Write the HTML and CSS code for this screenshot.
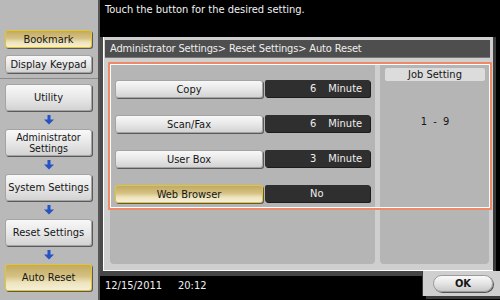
FILE: index.html
```html
<!DOCTYPE html>
<html lang="en">

<head>
  <meta charset="UTF-8">
  <title>Auto Reset</title>
  <link rel="stylesheet" href="styles.css">
</head>

<body>
  <div class="screen">
    <aside class="sidebar">
      <div class="shortcuts">
        <div class="btn btn-active">Bookmark</div>
        <div class="btn">Display Keypad</div>
      </div>

      <div class="crumbs">
        <div class="btn btn-tall">Utility</div>
        <div class="arrow"><svg width="10" height="10" viewBox="0 0 10 10"><path d="M3.5 0h3v4.5H10L5 9.5 0 4.5h3.5z" fill="#2553c4"/></svg></div>
        <div class="btn btn-tall btn-two">Administrator<br>Settings</div>
        <div class="arrow"><svg width="10" height="10" viewBox="0 0 10 10"><path d="M3.5 0h3v4.5H10L5 9.5 0 4.5h3.5z" fill="#2553c4"/></svg></div>
        <div class="btn btn-tall">System Settings</div>
        <div class="arrow"><svg width="10" height="10" viewBox="0 0 10 10"><path d="M3.5 0h3v4.5H10L5 9.5 0 4.5h3.5z" fill="#2553c4"/></svg></div>
        <div class="btn btn-tall">Reset Settings</div>
        <div class="arrow"><svg width="10" height="10" viewBox="0 0 10 10"><path d="M3.5 0h3v4.5H10L5 9.5 0 4.5h3.5z" fill="#2553c4"/></svg></div>
        <div class="btn btn-tall btn-active">Auto Reset</div>
      </div>
    </aside>

    <main class="main">
      <p class="prompt">Touch the button for the desired setting.</p>

      <section class="panel">
        <div class="panel-title">Administrator Settings&gt; Reset Settings&gt; Auto Reset</div>

        <div class="panel-body">
          <div class="settings">
            <div class="row">
              <div class="btn row-label">Copy</div>
              <div class="row-value"><span>6</span><span class="unit">Minute</span></div>
            </div>
            <div class="row">
              <div class="btn row-label">Scan/Fax</div>
              <div class="row-value"><span>6</span><span class="unit">Minute</span></div>
            </div>
            <div class="row">
              <div class="btn row-label">User Box</div>
              <div class="row-value"><span>3</span><span class="unit">Minute</span></div>
            </div>
            <div class="row">
              <div class="btn btn-active row-label">Web Browser</div>
              <div class="row-value"><span>No</span></div>
            </div>
          </div>

          <div class="job">
            <div class="job-label">Job Setting</div>
            <div class="job-range">1 &nbsp;- &nbsp;9</div>
          </div>
        </div>

        <div class="focus-ring"></div>
      </section>

      <div class="footer">
        <div class="clock"><span>12/15/2011</span><span class="time">20:12</span></div>
        <div class="ok-tab">
          <div class="btn-ok">OK</div>
        </div>
      </div>
    </main>
  </div>
</body>

</html>
```

FILE: styles.css
```css
body {
  margin: 0;
  background: #000;
  font-family: 'DejaVu Sans Condensed', 'DejaVu Sans', sans-serif;
  font-stretch: condensed;
  font-size: 11px;
  color: #151515;
}

.screen {
  display: flex;
  width: 500px;
  height: 300px;
  overflow: hidden;
}

/* left column */
.sidebar {
  width: 98px;
  background: #b9b9b9;
  border-right: 2px solid #555;
}

.shortcuts {
  height: 79px;
  box-sizing: border-box;
  padding: 30px 6px 0 5px;
  display: flex;
  flex-direction: column;
  gap: 7px;
  border-bottom: 1px solid #8a8a8a;
}

.crumbs {
  padding: 5px 6px 0 5px;
  display: flex;
  flex-direction: column;
}

.btn {
  height: 16px;
  display: flex;
  align-items: center;
  justify-content: center;
  text-align: center;
  line-height: 13px;
  border: 1px solid #a4a4a4;
  border-radius: 3px;
  background: linear-gradient(#f8f8f8, #e8e8e8 50%, #d3d3d3);
  box-shadow: 1px 1px 0 #5a5a5a;
}

.btn-tall {
  height: 25px;
}

.btn-two {
  font-size: 10.5px;
  line-height: 11px;
  padding-top: 1px;
  box-sizing: content-box;
  height: 24px;
}

.btn-active {
  border-color: #e4c62a;
  background: linear-gradient(#c3aa60, #d5c184 45%, #ede3bb 70%, #f5efd9);
}

.arrow {
  height: 18px;
  display: flex;
  align-items: center;
  justify-content: center;
}

/* right part */
.main {
  flex: 1;
  display: flex;
  flex-direction: column;
}

.prompt {
  height: 37px;
  box-sizing: border-box;
  margin: 0;
  padding: 3px 0 0 5px;
  color: #f2f2f2;
}

.panel {
  position: relative;
  width: 393px;
  height: 234px;
  box-sizing: border-box;
  padding: 3px 3px 0 2px;
  background: #cfcfcf;
  border-left: 3px solid #4b4b4b;
  box-shadow: 3px 0 0 #3a3a3a, inset 1px -1px 0 #fff;
}

.panel-title {
  height: 18px;
  padding-left: 5px;
  line-height: 18px;
  color: #eee;
  background: #4e4e4e;
  border-bottom: 1px solid #777;
  box-sizing: border-box;
  letter-spacing: -0.15px;
}

.panel-body {
  display: flex;
  gap: 5px;
  margin: 4px 0 0 5px;
}

.settings,
.job {
  height: 202px;
  box-sizing: border-box;
  background: #b5b5b5;
  border-radius: 0 0 4px 4px;
}

.settings {
  width: 265px;
  padding: 18px 5px 0;
  display: flex;
  flex-direction: column;
  gap: 17px;
}

.row {
  display: flex;
  gap: 2px;
  height: 18px;
}

.row-label {
  width: 146px;
}

.row-value {
  width: 105px;
  height: 17px;
  box-sizing: border-box;
  padding-left: 45px;
  display: flex;
  align-items: center;
  color: #f0f0f0;
  background: #2f2f2f;
  border-radius: 2px;
  box-shadow: 1px 1px 0 #1c1c1c;
}

.unit {
  margin-left: 12px;
}

.job {
  width: 109px;
  padding: 6px 4px 0 5px;
}

.job-label {
  height: 13px;
  line-height: 13px;
  text-align: center;
  background: #dcdcdc;
  border-radius: 2px;
}

.job-range {
  margin-top: 34px;
  text-align: center;
}

.focus-ring {
  position: absolute;
  left: 5px;
  top: 25px;
  width: 384px;
  height: 148px;
  box-sizing: border-box;
  border: 2px solid #ef8a68;
  box-shadow: inset 0 0 0 1px #fff;
}

.footer {
  flex: 1;
  display: flex;
}

.clock {
  flex: 1;
  padding: 3px 0 0 5px;
  border-top: 5px solid #464646;
  color: #f0f0f0;
}

.time {
  margin-left: 16px;
}

.ok-tab {
  width: 77px;
  height: 25px;
  box-sizing: border-box;
  padding: 4px 0 0 10px;
  background: #cfcfcf;
  box-shadow: 3px 3px 0 #3a3a3a, -1px 0 0 #3a3a3a;
}

.btn-ok {
  width: 60px;
  height: 17px;
  display: flex;
  align-items: center;
  justify-content: center;
  font-weight: bold;
  border: 1px solid #9a9a9a;
  border-radius: 9px;
  background: linear-gradient(#fafafa, #e4e4e4 50%, #c9c9c9);
  box-shadow: 1px 1px 0 #555;
  box-sizing: border-box;
}
```
